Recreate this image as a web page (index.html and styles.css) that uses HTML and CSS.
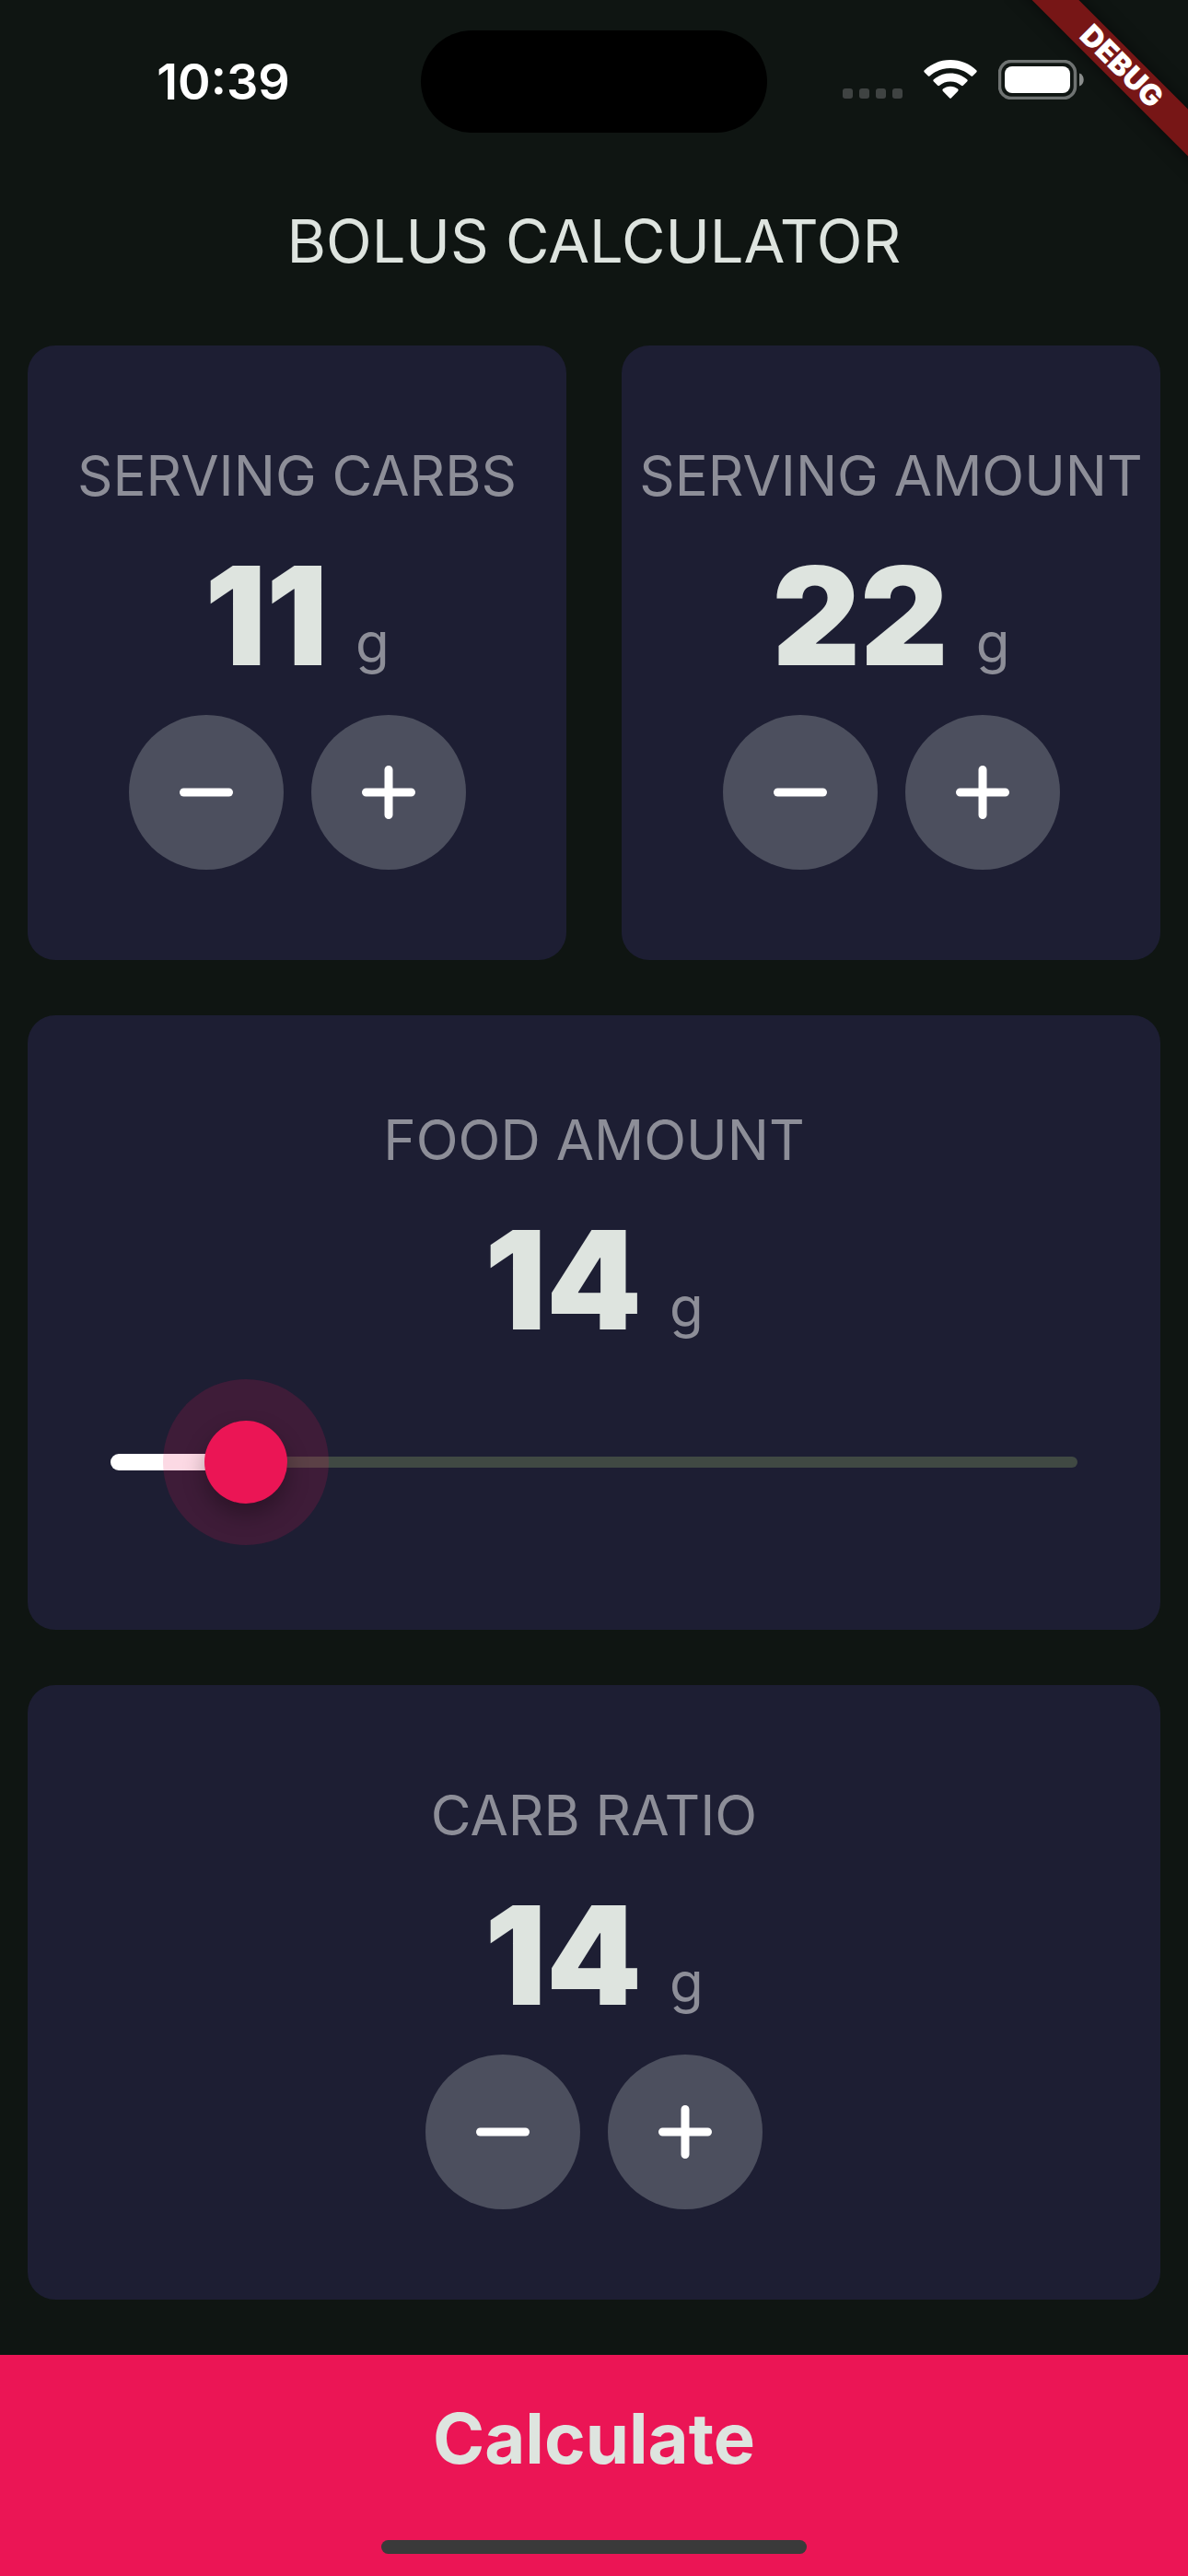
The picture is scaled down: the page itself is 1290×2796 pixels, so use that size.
FILE: index.html
```html
<!DOCTYPE html>
<html lang="en">
<head>
  <meta charset="utf-8">
  <meta name="viewport" content="width=device-width, initial-scale=1">
  <title>Bolus Calculator</title>
  <link rel="stylesheet" href="styles.css">
</head>
<body>
  <div class="ribbon-corner"><span class="ribbon">DEBUG</span></div>

  <div class="status-bar">
    <time class="status-time">10:39</time>
    <div class="island"></div>
    <div class="status-icons">
      <svg width="65" height="43" viewBox="0 0 65 43" fill="#3f4342" aria-hidden="true">
        <rect x="0" y="31" width="11" height="11" rx="3"/>
        <rect x="18" y="31" width="11" height="11" rx="3"/>
        <rect x="36" y="31" width="11" height="11" rx="3"/>
        <rect x="54" y="31" width="11" height="11" rx="3"/>
      </svg>
      <svg width="58" height="43" viewBox="0 0 58 43" fill="#fff" aria-hidden="true">
        <path d="M29 0C18 0 8 4.300 0.800 11.200Q-0.300 12.300 0.800 13.500L4.600 17.300Q5.700 18.300 6.800 17.300C12.700 12 20.500 9 29 9S45.300 12 51.200 17.300Q52.300 18.300 53.400 17.300L57.200 13.500Q58.300 12.300 57.200 11.200C50 4.300 40 0 29 0Z"/>
        <path d="M29 14.500C22 14.500 15.700 17.100 10.900 21.300Q9.700 22.400 10.900 23.600L14.900 27.600Q16 28.700 17.200 27.700C20.400 25 24.500 23.500 29 23.500S37.600 25 40.800 27.700Q42 28.700 43.100 27.600L47.100 23.600Q48.300 22.400 47.100 21.300C42.300 17.100 36 14.500 29 14.500Z"/>
        <path d="M29 28.800C25.900 28.800 23.100 29.900 20.900 31.600Q19.700 32.700 20.900 33.900L28 41.300Q29 42.300 30 41.300L37.100 33.900Q38.300 32.700 37.100 31.600C34.900 29.900 32.100 28.800 29 28.800Z"/>
      </svg>
      <svg width="93" height="43" viewBox="0 0 93 43" aria-hidden="true">
        <rect x="1.500" y="1.500" width="82" height="40" rx="12.500" fill="none" stroke="#6f7372" stroke-width="3.500"/>
        <rect x="7" y="7" width="71" height="29" rx="8" fill="#fff"/>
        <path d="M88 14.500C94.300 16.500 94.300 26.500 88 28.500Z" fill="#8a8d8c"/>
      </svg>
    </div>
  </div>

  <header class="app-bar"><h1>BOLUS CALCULATOR</h1></header>

  <main class="cards">
    <section class="card">
      <h2 class="label">SERVING CARBS</h2>
      <p class="reading"><output class="value">11</output><span class="unit">g</span></p>
      <div class="stepper">
        <button type="button" class="round" aria-label="Decrease serving carbs"><svg class="glyph" viewBox="0 0 60 60"><path d="M5.500 30H54.500"/></svg></button>
        <button type="button" class="round" aria-label="Increase serving carbs"><svg class="glyph" viewBox="0 0 60 60"><path d="M5.500 30H54.500M30 5.500V54.500"/></svg></button>
      </div>
    </section>

    <section class="card">
      <h2 class="label">SERVING AMOUNT</h2>
      <p class="reading"><output class="value">22</output><span class="unit">g</span></p>
      <div class="stepper">
        <button type="button" class="round" aria-label="Decrease serving amount"><svg class="glyph" viewBox="0 0 60 60"><path d="M5.500 30H54.500"/></svg></button>
        <button type="button" class="round" aria-label="Increase serving amount"><svg class="glyph" viewBox="0 0 60 60"><path d="M5.500 30H54.500M30 5.500V54.500"/></svg></button>
      </div>
    </section>

    <section class="card card-wide">
      <label class="label" for="food">FOOD AMOUNT</label>
      <p class="reading"><output class="value" for="food">14</output><span class="unit">g</span></p>
      <div class="slider" style="--value: 0.14">
        <input id="food" type="range" min="0" max="100" value="14">
      </div>
    </section>

    <section class="card card-wide">
      <h2 class="label">CARB RATIO</h2>
      <p class="reading"><output class="value">14</output><span class="unit">g</span></p>
      <div class="stepper">
        <button type="button" class="round" aria-label="Decrease carb ratio"><svg class="glyph" viewBox="0 0 60 60"><path d="M5.500 30H54.500"/></svg></button>
        <button type="button" class="round" aria-label="Increase carb ratio"><svg class="glyph" viewBox="0 0 60 60"><path d="M5.500 30H54.500M30 5.500V54.500"/></svg></button>
      </div>
    </section>
  </main>

  <footer class="bottom">
    <button type="button" class="calculate">Calculate</button>
    <div class="home-indicator"></div>
  </footer>
</body>
</html>
```
FILE: styles.css
```css
* {
  box-sizing: border-box;
}

body {
  position: relative;
  display: flex;
  flex-direction: column;
  min-height: 100vh;
  margin: 0;
  background: #0f1512;
  color: #dee4df;
  font-family: Inter, "Liberation Sans", sans-serif;
}

h1,
h2,
p {
  margin: 0;
}

button {
  padding: 0;
  border: 0;
  color: inherit;
  font: inherit;
  cursor: pointer;
}

/* Debug ribbon across the top right corner */
.ribbon-corner {
  position: absolute;
  top: 0;
  right: 0;
  width: 200px;
  height: 200px;
  overflow: hidden;
  pointer-events: none;
}

.ribbon {
  position: absolute;
  top: 54px;
  right: -78px;
  width: 300px;
  background: #771616;
  box-shadow: 0 0 18px rgba(0, 0, 0, 0.5);
  color: #fff;
  font-size: 32px;
  font-weight: 900;
  line-height: 36px;
  text-align: center;
  transform: rotate(45deg);
}

/* Status bar */
.status-bar {
  display: grid;
  grid-template-columns: 1fr 376px 1fr;
  align-items: center;
  height: 177px;
}

.status-time {
  padding-left: 28px;
  color: #fff;
  font-size: 54px;
  font-weight: 600;
  text-align: center;
}

.island {
  height: 111px;
  border-radius: 56px;
  background: #000;
}

.status-icons {
  display: flex;
  justify-content: flex-end;
  gap: 23px;
  padding: 0 113px 4px 0;
}

.app-bar {
  display: flex;
  align-items: center;
  justify-content: center;
  height: 168px;
}

.app-bar h1 {
  font-size: 65px;
  font-weight: 400;
}

/* Cards */
.cards {
  flex: 1;
  display: grid;
  grid-template-columns: 1fr 1fr;
  grid-auto-rows: 1fr;
  gap: 60px;
  padding: 30px 30px 60px;
}

.card {
  display: flex;
  flex-direction: column;
  align-items: center;
  justify-content: center;
  border-radius: 30px;
  background: #1d1e33;
}

.card-wide {
  grid-column: span 2;
}

.label {
  margin-bottom: 4px;
  color: #8d8e98;
  font-size: 60px;
  font-weight: 400;
  line-height: 84px;
  white-space: nowrap;
}

.reading {
  display: flex;
  align-items: flex-end;
  gap: 30px;
}

.value {
  font-size: 148px;
  font-weight: 900;
  line-height: 214px;
}

.unit {
  color: #8d8e98;
  font-size: 60px;
  line-height: 158px;
}

.stepper {
  display: flex;
  gap: 30px;
}

.round {
  display: grid;
  place-items: center;
  width: 168px;
  height: 168px;
  border-radius: 50%;
  background: #4c4f5e;
}

.glyph {
  width: 60px;
  height: 60px;
  fill: none;
  stroke: #fff;
  stroke-width: 9;
  stroke-linecap: round;
}

/* Slider: both tracks and the input share one grid cell */
.slider {
  display: grid;
  align-self: stretch;
  align-items: center;
  height: 180px;
  margin: 0 45px;
}

.slider::before,
.slider::after,
.slider input {
  grid-area: 1 / 1;
}

.slider::before {
  content: "";
  height: 12px;
  margin: 0 45px;
  border-radius: 6px;
  background: #404943;
}

.slider::after {
  content: "";
  width: calc((100% - 90px) * var(--value));
  height: 18px;
  margin-left: 45px;
  border-radius: 9px 0 0 9px;
  background: #fff;
}

.slider input {
  z-index: 1;
  width: 100%;
  height: 90px;
  margin: 0;
  background: none;
  appearance: none;
}

.slider input::-webkit-slider-thumb {
  width: 90px;
  height: 90px;
  border-radius: 50%;
  background: #eb1555;
  box-shadow: 0 12px 24px rgba(0, 0, 0, 0.3), 0 0 0 45px rgba(235, 21, 85, 0.16);
  appearance: none;
}

/* Bottom action */
.bottom {
  position: relative;
}

.calculate {
  display: block;
  width: 100%;
  height: 240px;
  padding-bottom: 60px;
  background: #eb1555;
  font-size: 76px;
  font-weight: 700;
}

.home-indicator {
  position: absolute;
  bottom: 24px;
  left: 50%;
  width: 462px;
  height: 15px;
  border-radius: 8px;
  background: #3a3a3a;
  transform: translateX(-50%);
}
```
